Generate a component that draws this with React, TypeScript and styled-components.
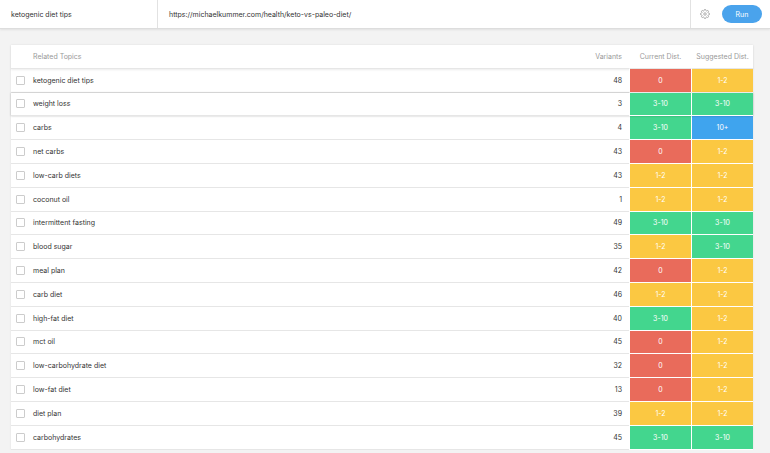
import React from "react";
import styled, { createGlobalStyle } from "styled-components";

const rows: [string, number, string, string][] = [
  ["ketogenic diet tips", 48, "0", "1-2"],
  ["weight loss", 3, "3-10", "3-10"],
  ["carbs", 4, "3-10", "10+"],
  ["net carbs", 43, "0", "1-2"],
  ["low-carb diets", 43, "1-2", "1-2"],
  ["coconut oil", 1, "1-2", "1-2"],
  ["intermittent fasting", 49, "3-10", "3-10"],
  ["blood sugar", 35, "1-2", "3-10"],
  ["meal plan", 42, "0", "1-2"],
  ["carb diet", 46, "1-2", "1-2"],
  ["high-fat diet", 40, "3-10", "1-2"],
  ["mct oil", 45, "0", "1-2"],
  ["low-carbohydrate diet", 32, "0", "1-2"],
  ["low-fat diet", 13, "0", "1-2"],
  ["diet plan", 39, "1-2", "1-2"],
  ["carbohydrates", 45, "3-10", "3-10"],
];

const colorFor = (v: string) =>
  v === "0" ? "#e96b5b" : v === "1-2" ? "#fbc842" : v === "3-10" ? "#43d68e" : "#3fa4ee";

const Global = createGlobalStyle`
  body { margin: 0; background: #f3f3f3; font-family: Inter, "Noto Sans", sans-serif; overflow: hidden; }
`;

const TopBar = styled.div`
  display: flex;
  height: 28px;
  background: #fff;
  border-bottom: 1px solid #ddd;
  box-shadow: 0 1px 2px rgba(0,0,0,0.08);
  font-size: 7px;
  color: #333;
`;

const Field = styled.div<{ $w?: number }>`
  display: flex;
  align-items: center;
  padding-left: 11px;
  ${(p) => (p.$w ? `width: ${p.$w}px;` : "flex: 1;")}
  border-right: 1px solid #e2e2e2;
`;

const Actions = styled.div`
  display: flex;
  align-items: center;
  gap: 12px;
  padding: 0 8px 0 9px;
`;

const RunButton = styled.button`
  width: 40px;
  height: 18px;
  border: none;
  border-radius: 9px;
  background: #4aa3ec;
  color: #fff;
  font-family: inherit;
  font-size: 7px;
`;

const Card = styled.div`
  margin: 16px 17px 0 11px;
  background: #fff;
  box-shadow: 0 0 2px rgba(0,0,0,0.08);
`;

const Row = styled.div<{ $head?: boolean; $hl?: boolean }>`
  display: grid;
  grid-template-columns: 22px 1fr 60px 62px 62px;
  height: 22.8px;
  border-bottom: 1px solid #e6e6e6;
  font-size: 7px;
  color: ${(p) => (p.$head ? "#999" : "#333")};
  ${(p) => p.$hl && "box-shadow: 0 0 2px rgba(0,0,0,0.25); position: relative;"}
  ${(p) => p.$head && "box-shadow: 0 1px 2px rgba(0,0,0,0.08);"}
  & > * { display: flex; align-items: center; }
`;

const Box = styled.span`
  padding-left: 5px;
  &::before {
    content: "";
    width: 7px;
    height: 7px;
    border: 1px solid #ccc;
    border-radius: 1px;
  }
`;

const Name = styled.span``;

const Num = styled.span`
  justify-content: flex-end;
  padding-right: 7px;
`;

const Dist = styled.span<{ $c?: string }>`
  justify-content: center;
  background: ${(p) => p.$c || "transparent"};
  color: ${(p) => (p.$c ? "#fff" : "inherit")};
  border-left: 1px solid #fff;
  margin-bottom: -1px;
  border-bottom: 1px solid ${(p) => (p.$c ? "#fff" : "transparent")};
`;

const Gear = () => (
  <svg width="10" height="10" viewBox="0 0 24 24" fill="none" stroke="#888" strokeWidth="1.6">
    <circle cx="12" cy="12" r="3" />
    <path d="M19.4 15a1.65 1.65 0 0 0 .33 1.82l.06.06a2 2 0 1 1-2.83 2.83l-.06-.06a1.65 1.65 0 0 0-1.82-.33 1.65 1.65 0 0 0-1 1.51V21a2 2 0 1 1-4 0v-.09A1.65 1.65 0 0 0 9 19.4a1.650 1.65 0 0 0-1.82.33l-.06.06a2 2 0 1 1-2.83-2.83l.06-.06A1.65 1.65 0 0 0 4.68 15a1.65 1.65 0 0 0-1.51-1H3a2 2 0 1 1 0-4h.09A1.65 1.65 0 0 0 4.6 9a1.65 1.65 0 0 0-.33-1.82l-.06-.06a2 2 0 1 1 2.830-2.83l.06.06A1.65 1.65 0 0 0 9 4.68 1.65 1.65 0 0 0 10 3.170V3a2 2 0 1 1 4 0v.09a1.65 1.65 0 0 0 1 1.51 1.65 1.65 0 0 0 1.82-.33l.06-.06a2 2 0 1 1 2.83 2.83l-.06.06A1.65 1.65 0 0 0 19.4 9a1.65 1.65 0 0 0 1.51 1H21a2 2 0 1 1 0 4h-.09a1.65 1.65 0 0 0-1.51 1z" />
  </svg>
);

export default function App() {
  return (
    <>
      <Global />
      <TopBar>
        <Field $w={146}>ketogenic diet tips</Field>
        <Field>https://michaelkummer.com/health/keto-vs-paleo-diet/</Field>
        <Actions>
          <Gear />
          <RunButton>Run</RunButton>
        </Actions>
      </TopBar>
      <Card>
        <Row $head>
          <span />
          <Name>Related Topics</Name>
          <Num>Variants</Num>
          <Dist>Current Dist.</Dist>
          <Dist>Suggested Dist.</Dist>
        </Row>
        {rows.map(([n, v, c, s], i) => (
          <Row key={n} $hl={i === 1}>
            <Box />
            <Name>{n}</Name>
            <Num>{v}</Num>
            <Dist $c={colorFor(c)}>{c}</Dist>
            <Dist $c={colorFor(s)}>{s}</Dist>
          </Row>
        ))}
      </Card>
    </>
  );
}
